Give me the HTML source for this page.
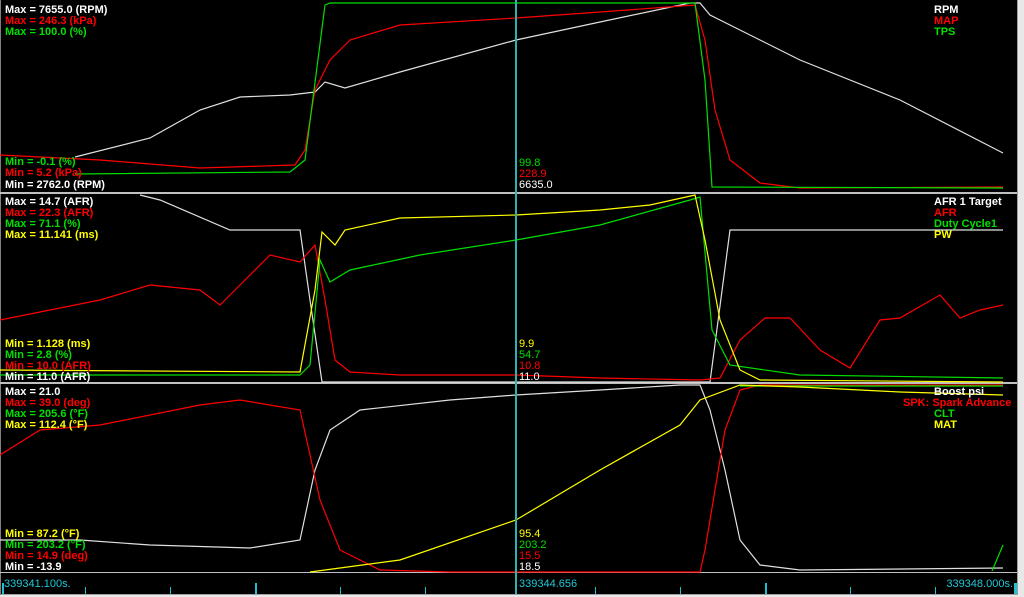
<!DOCTYPE html>
<html><head><style>
html,body{margin:0;padding:0;background:#e8e8e8;width:1024px;height:597px;overflow:hidden}
svg{display:block}
text{font-family:"Liberation Sans",Arial,sans-serif;font-size:11px}
.b{font-weight:bold}
</style></head><body>
<svg width="1024" height="597" xmlns="http://www.w3.org/2000/svg">
<rect x="0" y="0" width="1018" height="595" fill="#000"/>
<rect x="1017" y="0" width="1" height="595" fill="#a0a0a0"/>
<rect x="0" y="594" width="1018" height="1" fill="#a0a0a0"/>
<rect x="0" y="0" width="1" height="595" fill="#808080"/>
<!-- separators -->
<rect x="0" y="192" width="1017" height="2" fill="#c0c0c0"/>
<rect x="0" y="382" width="1017" height="2" fill="#c0c0c0"/>
<rect x="0" y="572" width="1017" height="1" fill="#c0c0c0"/>
<g fill="none" stroke-width="1.2">
<!-- panel 1 -->
<polyline stroke="#e0e0e0" points="75,157 150,138 200,110 240,97 290,95 315,92 325,82 345,88 400,72 516,40 600,22 690,3 700,3 710,15 800,60 900,100 1003,153"/>
<polyline stroke="#ff0000" points="0,155 100,160 200,168 295,165 305,150 315,90 330,60 350,40 400,25 516,18 600,12 695,5 705,40 715,110 730,160 760,183 800,188 1003,187"/>
<polyline stroke="#00e000" points="75,174 290,172 305,160 325,5 330,3 695,3 705,80 712,187 1003,188"/>
<!-- panel 2 -->
<polyline stroke="#e0e0e0" points="140,195 160,200 230,230 300,230 310,300 322,382 710,382 730,230 1003,230"/>
<polyline stroke="#ff0000" points="0,320 50,310 100,300 150,285 200,290 220,305 240,285 270,255 300,262 315,245 325,300 335,360 350,372 400,375 516,375 600,378 700,380 720,378 740,340 765,318 790,318 820,350 850,368 880,320 900,318 940,295 960,318 980,310 1003,305"/>
<polyline stroke="#00e000" points="0,375 300,375 310,365 320,260 330,282 350,270 420,255 516,240 600,225 690,200 700,197 712,330 730,365 800,375 1003,378"/>
<polyline stroke="#ffff00" points="0,370 300,372 315,290 322,232 335,245 345,230 400,218 516,215 600,210 650,205 695,195 705,240 720,320 740,370 760,380 1003,382"/>
<!-- panel 3 -->
<polyline stroke="#e0e0e0" points="0,540 80,540 150,545 250,548 300,540 315,470 330,430 360,410 450,400 516,395 600,390 680,385 700,385 710,410 725,470 740,540 760,565 800,570 1003,568"/>
<polyline stroke="#ff0000" points="0,455 40,430 100,425 200,405 240,400 300,410 320,500 340,550 380,570 450,572 700,572 705,550 715,490 725,430 740,390 760,385 1003,385"/>
<polyline stroke="#00e000" points="740,386 1003,386"/>
<polyline stroke="#00e000" points="992,571 1003,545"/>
<polyline stroke="#ffff00" points="310,572 400,560 516,520 600,470 680,425 700,400 740,385 800,387 900,392 1003,395"/>
</g>
<!-- cursor -->
<rect x="515" y="0" width="2" height="594" fill="#30b0b0"/>
<!-- ticks -->
<g fill="#20c0d0">
<rect x="2" y="583" width="2" height="11"/><rect x="85" y="587" width="1" height="7"/><rect x="170" y="587" width="1" height="7"/><rect x="255" y="583" width="2" height="11"/><rect x="340" y="587" width="1" height="7"/><rect x="425" y="587" width="1" height="7"/><rect x="595" y="587" width="1" height="7"/><rect x="680" y="587" width="1" height="7"/><rect x="765" y="583" width="2" height="11"/><rect x="850" y="587" width="1" height="7"/><rect x="935" y="587" width="1" height="7"/><rect x="1014" y="583" width="3" height="11"/>
</g>
<g fill="#20c8d8" style="font-size:12px">
<text x="4" y="587">339341.100s.</text>
<text x="519" y="587">339344.656</text>
<text x="1013" y="587" text-anchor="end">339348.000s.</text>
</g>
<!-- labels panel 1 -->
<g class="b">
<text x="5" y="13" fill="#fff">Max = 7655.0 (RPM)</text>
<text x="5" y="24" fill="#ff0000">Max = 246.3 (kPa)</text>
<text x="5" y="35" fill="#00e000">Max = 100.0 (%)</text>
<text x="5" y="165" fill="#00e000">Min = -0.1 (%)</text>
<text x="5" y="176" fill="#ff0000">Min = 5.2 (kPa)</text>
<text x="5" y="188" fill="#fff">Min = 2762.0 (RPM)</text>
<text x="934" y="13" fill="#fff">RPM</text>
<text x="934" y="24" fill="#ff0000">MAP</text>
<text x="934" y="35" fill="#00e000">TPS</text>
<!-- panel 2 -->
<text x="5" y="205" fill="#fff">Max = 14.7 (AFR)</text>
<text x="5" y="216" fill="#ff0000">Max = 22.3 (AFR)</text>
<text x="5" y="227" fill="#00e000">Max = 71.1 (%)</text>
<text x="5" y="238" fill="#ffff00">Max = 11.141 (ms)</text>
<text x="5" y="347" fill="#ffff00">Min = 1.128 (ms)</text>
<text x="5" y="358" fill="#00e000">Min = 2.8 (%)</text>
<text x="5" y="369" fill="#ff0000">Min = 10.0 (AFR)</text>
<text x="5" y="380" fill="#fff">Min = 11.0 (AFR)</text>
<text x="934" y="205" fill="#fff">AFR 1 Target</text>
<text x="934" y="216" fill="#ff0000">AFR</text>
<text x="934" y="227" fill="#00e000">Duty Cycle1</text>
<text x="934" y="238" fill="#ffff00">PW</text>
<!-- panel 3 -->
<text x="5" y="395" fill="#fff">Max = 21.0</text>
<text x="5" y="406" fill="#ff0000">Max = 39.0 (deg)</text>
<text x="5" y="417" fill="#00e000">Max = 205.6 (°F)</text>
<text x="5" y="428" fill="#ffff00">Max = 112.4 (°F)</text>
<text x="5" y="537" fill="#ffff00">Min = 87.2 (°F)</text>
<text x="5" y="548" fill="#00e000">Min = 203.2 (°F)</text>
<text x="5" y="559" fill="#ff0000">Min = 14.9 (deg)</text>
<text x="5" y="570" fill="#fff">Min = -13.9</text>
<text x="934" y="395" fill="#fff">Boost psi</text>
<text x="903" y="406" fill="#ff0000">SPK: Spark Advance</text>
<text x="934" y="417" fill="#00e000">CLT</text>
<text x="934" y="428" fill="#ffff00">MAT</text>
</g>
<!-- cursor values -->
<g>
<text x="519" y="166" fill="#00e000">99.8</text>
<text x="519" y="177" fill="#ff0000">228.9</text>
<text x="519" y="188" fill="#fff">6635.0</text>
<text x="519" y="347" fill="#ffff00">9.9</text>
<text x="519" y="358" fill="#00e000">54.7</text>
<text x="519" y="369" fill="#ff0000">10.8</text>
<text x="519" y="380" fill="#fff">11.0</text>
<text x="519" y="537" fill="#ffff00">95.4</text>
<text x="519" y="548" fill="#00e000">203.2</text>
<text x="519" y="559" fill="#ff0000">15.5</text>
<text x="519" y="570" fill="#fff">18.5</text>
</g>
</svg>
</body></html>
